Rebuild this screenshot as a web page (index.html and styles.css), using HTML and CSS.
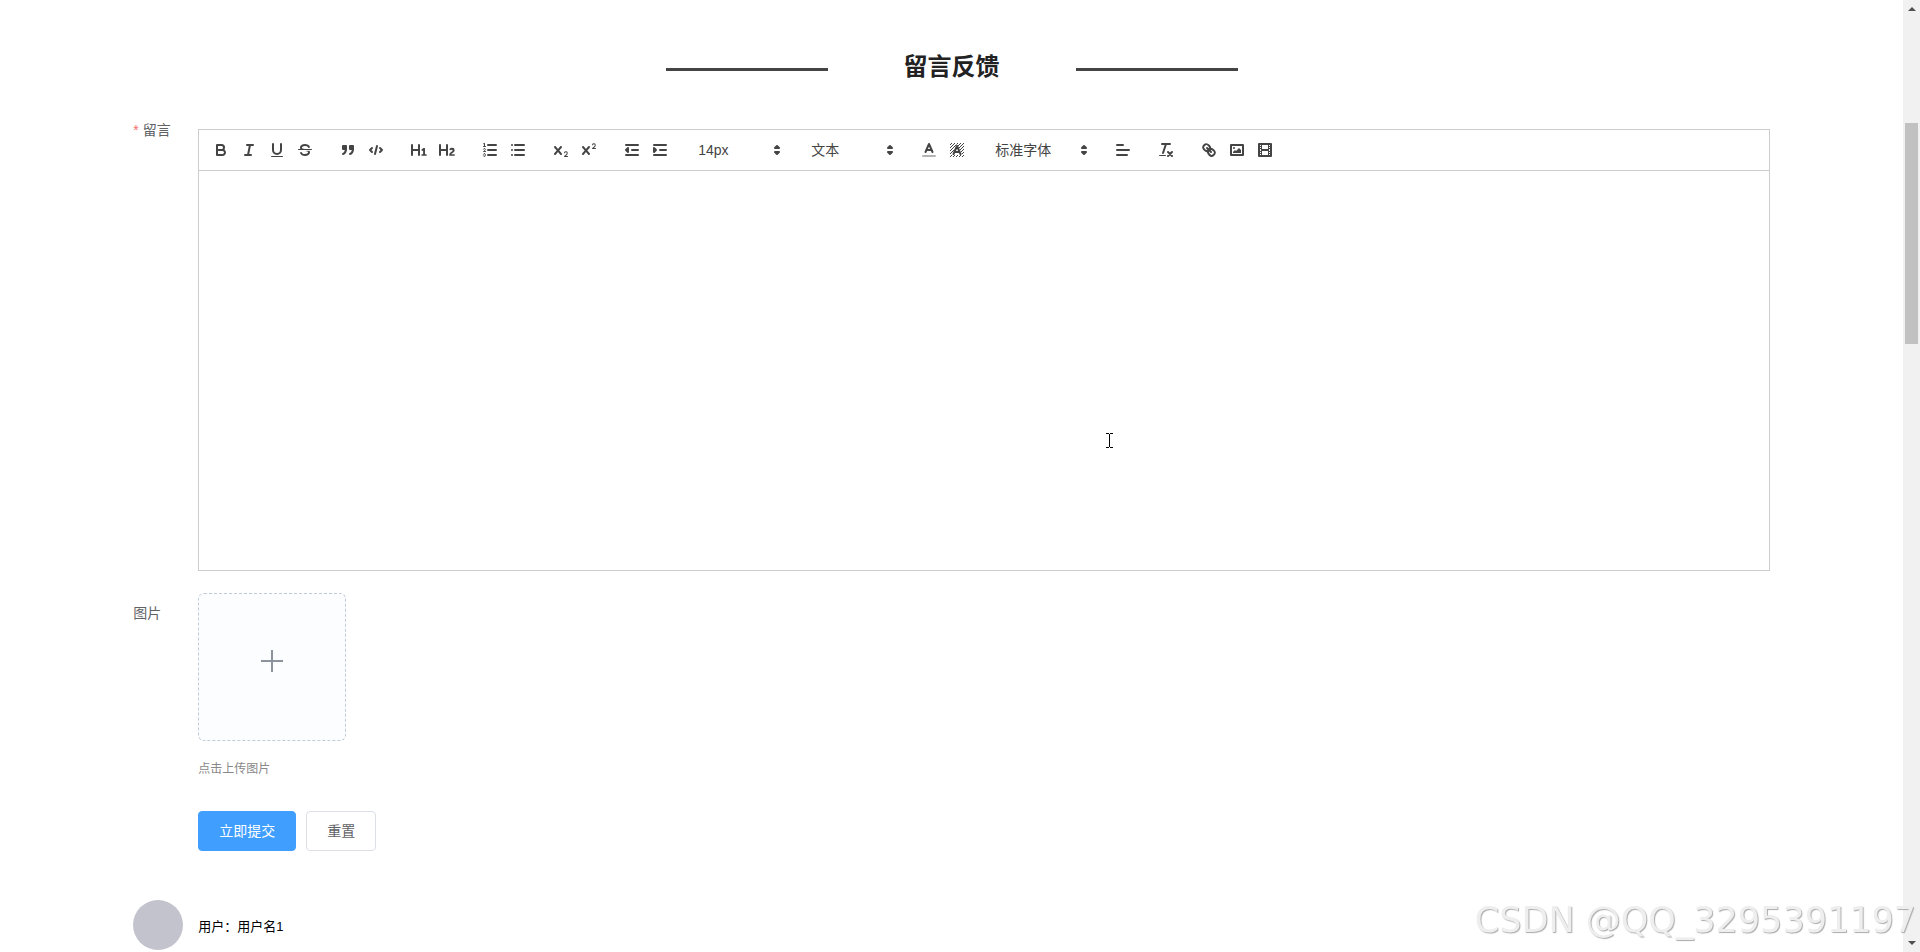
FILE: index.html
```html
<!DOCTYPE html>
<html lang="zh-CN">
<head>
    <meta charset="UTF-8">
    <meta name="viewport" content="width=device-width, initial-scale=1.0">
    <title>留言反馈</title>
    <link rel="stylesheet" href="styles.css">
</head>
<body>
    <main class="page">
        <div class="section-title">
            <span class="title-line"></span>
            <h2>留言反馈</h2>
            <span class="title-line"></span>
        </div>

        <form class="message-form" onsubmit="return false">
            <div class="form-item">
                <label class="form-label required" for="content">留言</label>
                <div class="editor">
                    <div class="toolbar">
                        <span class="formats">
                            <button type="button" aria-label="bold"><svg viewBox="0 0 18 18"><path class="stroke" d="M5,4H9.5A2.5,2.5,0,0,1,12,6.5v0A2.5,2.5,0,0,1,9.5,9H5A0,0,0,0,1,5,9V4A0,0,0,0,1,5,4Z"/><path class="stroke" d="M5,9h5.5A2.5,2.5,0,0,1,13,11.5v0A2.5,2.5,0,0,1,10.5,14H5a0,0,0,0,1,0,0V9A0,0,0,0,1,5,9Z"/></svg></button>
                            <button type="button" aria-label="italic"><svg viewBox="0 0 18 18"><path class="stroke" d="M7,4H13M5,14H11M8,14L10,4"/></svg></button>
                            <button type="button" aria-label="underline"><svg viewBox="0 0 18 18"><path class="stroke" d="M5,3V9a4.012,4.012,0,0,0,4,4H9a4.012,4.012,0,0,0,4-4V3"/><rect class="fill" height="1" rx="0.5" ry="0.5" width="12" x="3" y="15"/></svg></button>
                            <button type="button" aria-label="strike"><svg viewBox="0 0 18 18"><path class="stroke thin" d="M15.5,8.5H2.5"/><path class="fill" d="M9.007,8C6.542,7.791,6,7.519,6,6.5,6,5.792,7.283,5,9,5c1.571,0,2.765.679,2.969,1.309a1,1,0,0,0,1.9-.617C13.356,4.106,11.354,3,9,3,6.2,3,4,4.538,4,6.5a3.2,3.2,0,0,0,.5,1.843Z"/><path class="fill" d="M8.984,10C11.457,10.208,12,10.479,12,11.5c0,0.708-1.283,1.5-3,1.5-1.571,0-2.765-.679-2.969-1.309a1,1,0,1,0-1.9.617C4.644,13.894,6.646,15,9,15c2.8,0,5-1.538,5-3.5a3.2,3.2,0,0,0-.5-1.843Z"/></svg></button>
                        </span>
                        <span class="formats">
                            <button type="button" aria-label="blockquote"><svg viewBox="0 0 18 18"><rect class="fill stroke" height="3" width="3" x="4" y="5"/><rect class="fill stroke" height="3" width="3" x="11" y="5"/><path class="fill stroke" d="M7,8c0,4.031-3,5-3,5"/><path class="fill stroke" d="M14,8c0,4.031-3,5-3,5"/></svg></button>
                            <button type="button" aria-label="code block"><svg viewBox="0 0 18 18"><path class="stroke" d="M5,7L3,9L5,11M13,7L15,9L13,11M10,5L8,13"/></svg></button>
                        </span>
                        <span class="formats">
                            <button type="button" aria-label="header 1"><svg viewBox="0 0 18 18"><path class="fill" d="M10,4V14a1,1,0,0,1-2,0V10H3v4a1,1,0,0,1-2,0V4A1,1,0,0,1,3,4V8H8V4a1,1,0,0,1,2,0Zm6.06787,9.209H14.98975V7.59863a.54085.54085,0,0,0-.605-.60547h-.62744a1.01119,1.01119,0,0,0-.748.29688L11.645,8.56641a.5435.5435,0,0,0-.022.8584l.28613.30762a.53861.53861,0,0,0,.84717.0332l.09912-.08789a1.2137,1.2137,0,0,0,.2417-.35254h.02246s-.01123.30859-.01123.60547V13.209H12.041a.54085.54085,0,0,0-.605.60547v.43945a.54085.54085,0,0,0,.605.60547h4.02686a.54085.54085,0,0,0,.605-.60547v-.43945A.54085.54085,0,0,0,16.06787,13.209Z"/></svg></button>
                            <button type="button" aria-label="header 2"><svg viewBox="0 0 18 18"><path class="fill" d="M16.73975,13.81445v.43945a.54085.54085,0,0,1-.605.60547H11.855a.58392.58392,0,0,1-.64893-.60547V14.0127c0-2.90527,3.39941-3.42187,3.39941-4.55469a.77675.77675,0,0,0-.84717-.78125,1.17684,1.17684,0,0,0-.83594.38477c-.2749.26367-.561.374-.85791.13184l-.4292-.34082c-.30811-.24219-.38525-.51758-.1543-.81445a2.97155,2.97155,0,0,1,2.45361-1.17676,2.45393,2.45393,0,0,1,2.68408,2.40918c0,2.45312-3.1792,2.92676-3.27832,3.93848h2.79443A.54085.54085,0,0,1,16.73975,13.81445ZM9,3A.99974.99974,0,0,0,8,4V8H3V4A1,1,0,0,0,1,4V14a1,1,0,0,0,2,0V10H8v4a1,1,0,0,0,2,0V4A.99974.99974,0,0,0,9,3Z"/></svg></button>
                        </span>
                        <span class="formats">
                            <button type="button" aria-label="ordered list"><svg viewBox="0 0 18 18"><path class="stroke" d="M7,4H15M7,9H15M7,14H15"/><path class="stroke thin" d="M2.5,5.5H4.5"/><path class="fill" d="M3.5,6A0.5,0.5,0,0,1,3,5.5V3.085l-0.276.138A0.5,0.5,0,0,1,2.053,3c-0.124-.247-0.023-0.324.224-0.447l1-.5A0.5,0.5,0,0,1,4,2.5v3A0.5,0.5,0,0,1,3.5,6Z"/><path class="stroke thin" d="M4.5,10.5h-2c0-.234,1.85-1.076,1.85-2.234A0.959,0.959,0,0,0,2.5,8.156"/><path class="stroke thin" d="M2.5,14.846a0.959,0.959,0,0,0,1.85-.109A0.7,0.7,0,0,0,3.75,14a0.688,0.688,0,0,0,.6-0.736,0.959,0.959,0,0,0-1.85-.109"/></svg></button>
                            <button type="button" aria-label="bullet list"><svg viewBox="0 0 18 18"><path class="stroke" d="M6,4H15M6,9H15M6,14H15M3,4H3M3,9H3M3,14H3"/></svg></button>
                        </span>
                        <span class="formats">
                            <button type="button" aria-label="subscript"><svg viewBox="0 0 18 18"><path class="fill" d="M15.5,15H13.861a3.858,3.858,0,0,0,1.914-2.975,1.8,1.8,0,0,0-1.6-1.751A1.921,1.921,0,0,0,12.021,11.7a0.50013,0.50013,0,1,0,.957.291h0a0.914,0.914,0,0,1,1.053-.725,0.81,0.81,0,0,1,.744.762c0,1.076-1.16971,1.86982-1.93971,2.43082A1.45639,1.45639,0,0,0,12,15.5a0.5,0.5,0,0,0,.5.5h3A0.5,0.5,0,0,0,15.5,15Z"/><path class="fill" d="M9.65,5.241a1,1,0,0,0-1.409.108L6,7.964,3.759,5.349A1,1,0,0,0,2.192,6.59178Q2.21541,6.6213,2.241,6.649L4.684,9.5,2.241,12.35A1,1,0,0,0,3.71,13.70722q0.02557-.02768.049-0.05722L6,11.036,8.241,13.65a1,1,0,1,0,1.567-1.24277Q9.78459,12.3777,9.759,12.35L7.316,9.5,9.759,6.651A1,1,0,0,0,9.65,5.241Z"/></svg></button>
                            <button type="button" aria-label="superscript"><svg viewBox="0 0 18 18"><path class="fill" d="M15.5,7H13.861a4.015,4.015,0,0,0,1.914-2.975,1.8,1.8,0,0,0-1.6-1.751A1.922,1.922,0,0,0,12.021,3.7a0.5,0.5,0,1,0,.957.291,0.917,0.917,0,0,1,1.053-.725,0.81,0.81,0,0,1,.744.762c0,1.077-1.164,1.925-1.934,2.486A1.423,1.423,0,0,0,12,7.5a0.5,0.5,0,0,0,.5.5h3A0.5,0.5,0,0,0,15.5,7Z"/><path class="fill" d="M9.651,5.241a1,1,0,0,0-1.41.108L6,7.964,3.759,5.349a1,1,0,1,0-1.519,1.3L4.683,9.5,2.241,12.35a1,1,0,1,0,1.519,1.3L6,11.036,8.241,13.65a1,1,0,0,0,1.519-1.3L7.317,9.5,9.759,6.651A1,1,0,0,0,9.651,5.241Z"/></svg></button>
                        </span>
                        <span class="formats">
                            <button type="button" aria-label="outdent"><svg viewBox="0 0 18 18"><path class="stroke" d="M3,14H15M3,4H15M9,9H15"/><path class="fill stroke" d="M5,7L5,11L3,9Z"/></svg></button>
                            <button type="button" aria-label="indent"><svg viewBox="0 0 18 18"><path class="stroke" d="M3,14H15M3,4H15M9,9H15"/><path class="fill stroke" d="M3,7L3,11L5,9Z"/></svg></button>
                        </span>
                        <span class="formats">
                            <span class="picker">
                                <select aria-label="size"><option>14px</option><option>16px</option><option>18px</option></select>
                                <svg viewBox="0 0 18 18"><path class="fill stroke" d="M7,11L9,13L11,11ZM7,7L9,5L11,7Z"/></svg>
                            </span>
                        </span>
                        <span class="formats">
                            <span class="picker">
                                <select aria-label="header"><option>文本</option><option>标题1</option><option>标题2</option></select>
                                <svg viewBox="0 0 18 18"><path class="fill stroke" d="M7,11L9,13L11,11ZM7,7L9,5L11,7Z"/></svg>
                            </span>
                        </span>
                        <span class="formats">
                            <button type="button" aria-label="color"><svg viewBox="0 0 18 18"><path class="stroke faded" d="M3,15H15"/><path class="stroke" d="M5.5,11L9,3L12.5,11M11.63,9H6.38"/></svg></button>
                            <button type="button" aria-label="background">
                                <svg viewBox="0 0 18 18">
                                    <defs>
                                        <pattern id="hatch" width="3" height="3" patternUnits="userSpaceOnUse"><path class="hatch" d="M-1,1L1,-1M0,3L3,0M2,4L4,2"/></pattern>
                                    </defs>
                                    <rect x="2" y="2" width="14" height="14" fill="url(#hatch)"/>
                                    <path class="halo" d="M5.5,13L9,5L12.5,13Z"/>
                                    <path class="stroke" d="M5.5,13L9,5L12.5,13M11.63,11H6.38"/>
                                </svg>
                            </button>
                        </span>
                        <span class="formats">
                            <span class="picker picker-font">
                                <select aria-label="font"><option>标准字体</option><option>衬线字体</option><option>等宽字体</option></select>
                                <svg viewBox="0 0 18 18"><path class="fill stroke" d="M7,11L9,13L11,11ZM7,7L9,5L11,7Z"/></svg>
                            </span>
                        </span>
                        <span class="formats">
                            <button type="button" aria-label="align"><svg viewBox="0 0 18 18"><path class="stroke" d="M3,9H15M3,14H13M3,4H9"/></svg></button>
                        </span>
                        <span class="formats">
                            <button type="button" aria-label="clean"><svg viewBox="0 0 18 18"><path class="stroke" d="M5,3H13M6,12L9,3M11,11L15,15M15,11L11,15"/><rect class="fill" height="1" rx="0.5" ry="0.5" width="7" x="2" y="14"/></svg></button>
                        </span>
                        <span class="formats">
                            <button type="button" aria-label="link"><svg viewBox="0 0 18 18"><path class="stroke" d="M7,7L11,11"/><path class="stroke" d="M8.9,4.577a3.476,3.476,0,0,1,.36,4.679A3.476,3.476,0,0,1,4.577,8.9C3.185,7.5,2.035,6.4,4.217,4.217S7.5,3.185,8.9,4.577Z"/><path class="stroke" d="M13.423,9.1a3.476,3.476,0,0,0-4.679-.36,3.476,3.476,0,0,0,.36,4.679c1.392,1.392,2.5,2.542,4.679.36S14.815,10.5,13.423,9.1Z"/></svg></button>
                            <button type="button" aria-label="image"><svg viewBox="0 0 18 18"><rect class="stroke" height="10" width="12" x="3" y="4"/><circle class="fill" cx="6" cy="7" r="1"/><path class="fill" d="M5,12L5,11L7,9L8,10L11,7L13,9L13,12Z"/></svg></button>
                            <button type="button" aria-label="video"><svg viewBox="0 0 18 18"><rect class="stroke" height="12" width="12" x="3" y="3"/><path class="fill" d="M5,3H6V15H5ZM12,3H13V15H12ZM5,8H13V10H5ZM3,5H6V6H3ZM3,7H6V8H3ZM3,10H6V11H3ZM3,12H6V13H3ZM12,5H15V6H12ZM12,7H15V8H12ZM12,10H15V11H12ZM12,12H15V13H12Z"/></svg></button>
                        </span>
                    </div>
                    <textarea id="content" class="editor-content"></textarea>
                </div>
            </div>

            <div class="form-item">
                <label class="form-label label-upload" for="uploadButton">图片</label>
                <div>
                    <button type="button" id="uploadButton" class="upload-card" aria-label="上传图片">
                        <svg viewBox="0 0 24 24"><path d="M12 1V23M1 12H23"/></svg>
                    </button>
                    <div class="upload-tip">点击上传图片</div>
                </div>
            </div>

            <div class="form-buttons">
                <button type="submit" class="btn btn-primary">立即提交</button>
                <button type="reset" class="btn">重置</button>
            </div>
        </form>

        <div class="comment">
            <div class="avatar"></div>
            <div class="comment-user">用户：用户名1</div>
        </div>
    </main>

    <svg class="text-cursor" viewBox="0 0 9 17"><path d="M1 1.500H4M5 1.500H8M4.500 2V15M1 15.500H4M5 15.500H8"/></svg>

    <div class="scrollbar">
        <span class="arrow arrow-up"></span>
        <div class="scroll-thumb"></div>
        <span class="arrow arrow-down"></span>
    </div>

    <div class="watermark">CSDN @QQ_3295391197</div>
</body>
</html>
```
FILE: styles.css
```css
* {
    box-sizing: border-box;
}

body {
    margin: 0;
    padding-right: 17px; /* room for the scrollbar */
    font-family: "Liberation Sans", "Noto Sans CJK SC", sans-serif;
    font-size: 14px;
    color: #606266;
    background-color: #fff;
}

button, select, textarea {
    font-family: inherit;
    font-size: 14px;
}

.page {
    padding: 0 7%;
}

.section-title {
    display: flex;
    justify-content: center;
    align-items: center;
    gap: 76px;
    padding: 40px 0 35px;
}

.section-title h2 {
    margin: 0;
    font-size: 24px;
    line-height: 54px;
    color: #222;
}

.title-line {
    width: 162px;
    height: 3px;
    margin-top: 4px;
    background-color: #444;
}

/* form */
.form-item {
    display: flex;
    margin-bottom: 22px;
}

.form-label {
    flex: none;
    width: 65px;
    line-height: 40px;
}

.form-label.required {
    line-height: 2px;
}

.form-label.required::before {
    content: "*";
    margin-right: 4px;
    color: #f56c6c;
}

/* editor */
.editor {
    flex: 1;
    border: 1px solid #ccc;
}

.toolbar {
    display: flex;
    flex-wrap: wrap;
    padding: 8px;
    border-bottom: 1px solid #ccc;
}

.formats {
    display: flex;
    margin-right: 15px;
}

.formats button {
    width: 28px;
    height: 24px;
    padding: 3px 5px;
    border: none;
    background: none;
    cursor: pointer;
}

.formats svg {
    display: block;
    width: 18px;
    height: 18px;
}

.stroke {
    fill: none;
    stroke: #444;
    stroke-width: 2;
    stroke-linecap: round;
    stroke-linejoin: round;
}

.fill {
    fill: #444;
}

.thin {
    stroke-width: 1;
}

.faded {
    opacity: 0.4;
}

.hatch {
    stroke: #444;
    stroke-width: 1;
}

.halo {
    fill: #fff;
    stroke: #fff;
    stroke-width: 2;
}

.picker {
    position: relative;
    width: 98px;
    height: 24px;
}

.picker-font {
    width: 108px;
}

.picker select {
    width: 100%;
    height: 24px;
    padding: 0 9px;
    border: none;
    background: none;
    color: #444;
    appearance: none;
}

.picker svg {
    position: absolute;
    top: 3px;
    right: 1px;
    pointer-events: none;
}

.editor-content {
    display: block;
    width: 100%;
    height: 399px;
    padding: 12px 15px;
    border: none;
    outline: none;
    resize: none;
}

/* upload */
.upload-card {
    display: block;
    width: 148px;
    height: 148px;
    padding: 0 0 10px;
    border: 1px dashed #c0ccda;
    border-radius: 6px;
    background-color: #fbfdff;
    cursor: pointer;
}

.upload-card svg {
    width: 24px;
    height: 24px;
    stroke: #8c939d;
    stroke-width: 2;
}

.upload-tip {
    margin-top: 8px;
    font-size: 12px;
    line-height: 40px;
    color: #888;
}

.form-buttons {
    display: flex;
    gap: 10px;
    margin-left: 65px;
}

.btn {
    height: 40px;
    padding: 0 20px 2px;
    border: 1px solid #dcdfe6;
    border-radius: 4px;
    background-color: #fff;
    color: #606266;
    cursor: pointer;
}

.btn-primary {
    border-color: #409eff;
    background-color: #409eff;
    color: #fff;
}

/* comments */
.comment {
    display: flex;
    align-items: center;
    gap: 15px;
    margin-top: 49px;
}

.avatar {
    width: 50px;
    height: 50px;
    border-radius: 50%;
    background-color: #c3c3cd;
}

.comment-user {
    font-size: 13px;
    color: #000;
}

.text-cursor {
    position: absolute;
    top: 432px;
    left: 1105px;
    width: 9px;
    height: 17px;
    fill: none;
    stroke: #000;
    pointer-events: none;
}

/* scrollbar */
.scrollbar {
    position: fixed;
    top: 0;
    right: 0;
    bottom: 0;
    display: flex;
    flex-direction: column;
    align-items: center;
    width: 17px;
    padding: 7px 0;
    background-color: #f1f1f1;
}

.arrow {
    border: 4px solid transparent;
}

.arrow-up {
    border-top: none;
    border-bottom-color: #505050;
}

.arrow-down {
    margin-top: auto;
    border-bottom: none;
    border-top-color: #505050;
}

.scroll-thumb {
    width: 13px;
    height: 221px;
    margin-top: 112px;
    background-color: #c1c1c1;
}

.watermark {
    position: fixed;
    right: 4px;
    bottom: 10px;
    font-family: "DejaVu Sans", sans-serif;
    font-size: 35px;
    line-height: 44px;
    color: #eee;
    text-shadow: 1px 1px 1px #aaa;
    pointer-events: none;
}
```
